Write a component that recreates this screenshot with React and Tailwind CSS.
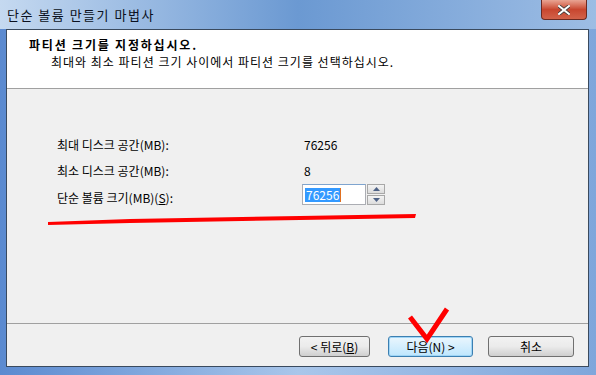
import React from 'react';

const ko = { fontFamily: '"Noto Sans CJK KR", "Noto Sans", "Liberation Sans", sans-serif' };

function WinButton({ children, focused, className = '' }) {
  return (
    <button
      className={`h-[21px] rounded-[3px] border text-[12px] leading-none text-black flex items-center justify-center ${
        focused
          ? 'border-[#3c7fb1] shadow-[0_0_0_1px_#9fd5f6_inset] bg-gradient-to-b from-[#eaf6fd] to-[#bee6fd]'
          : 'border-[#707070] bg-gradient-to-b from-[#f2f2f2] via-[#ebebeb] to-[#cfcfcf]'
      } ${className}`}
      style={ko}
    >
      {children}
    </button>
  );
}

export default function App() {
  return (
    <div
      className="relative w-[596px] h-[375px] overflow-hidden flex flex-col bg-gradient-to-r from-[#5b8ad0] via-[#a9c6ea] to-[#7fa6db]"
      style={ko}
    >
      {/* Title bar */}
      <div className="h-[29px] flex justify-between items-start bg-gradient-to-r from-[#c5d9f0] via-[#6b99d2] to-[#9dbde4]">
        <span className="pl-[7px] pt-[6px] text-[13px] leading-[17px] tracking-[1.5px] text-[#0a1020]">단순 볼륨 만들기 마법사</span>
        <div className="mr-[9px] w-[46px] h-[20px] rounded-b-[4px] border border-t-0 border-[#6b2a22] bg-gradient-to-b from-[#e8a493] via-[#c8462f] to-[#d2624a] flex items-center justify-center">
          <svg width="12" height="10" viewBox="0 0 12 10">
            <path d="M1 1 L11 9 M11 1 L1 9" stroke="#3a3a3a" strokeWidth="3.6" strokeLinecap="square" />
            <path d="M1 1 L11 9 M11 1 L1 9" stroke="#ffffff" strokeWidth="2" strokeLinecap="square" />
          </svg>
        </div>
      </div>

      {/* Client area */}
      <div className="flex-1 ml-[6px] mr-[7px] mb-[8px] border border-[#3a4a5e] bg-[#f0f0f0] flex flex-col">
        <div className="h-[59px] bg-white border-b border-[#a0a0a0] pl-[22px] pt-[7px]">
          <div className="text-[12px] leading-[16px] font-bold tracking-[1.8px] text-black">파티션 크기를 지정하십시오.</div>
          <div className="pl-[22px] pt-[1px] text-[12px] leading-[16px] tracking-[1px] text-black">
            최대와 최소 파티션 크기 사이에서 파티션 크기를 선택하십시오.
          </div>
        </div>

        <div className="flex-1 pl-[50px] pt-[48px] text-[12px] text-black">
          <div className="flex h-[26px] items-start">
            <span className="w-[247px] leading-[16px]">최대 디스크 공간(MB):</span>
            <span className="leading-[16px]">76256</span>
          </div>
          <div className="flex h-[26px] items-start">
            <span className="w-[247px] leading-[16px]">최소 디스크 공간(MB):</span>
            <span className="leading-[16px]">8</span>
          </div>
          <div className="flex items-start">
            <span className="w-[245px] leading-[16px] pt-[1px]">
              단순 볼륨 크기(MB)(<span className="underline">S</span>):
            </span>
            <div className="flex h-[21px] -mt-[5px]">
              <div className="w-[64px] h-[21px] bg-white border border-[#abadb3] border-t-[#7ea4cf] flex items-center pl-[2px]">
                <span className="bg-[#3399ff] text-white leading-[14px] px-[1px]">76256</span>
                <span className="w-[1px] h-[14px] bg-[#e07020]" />
              </div>
              <div className="ml-[1px] w-[18px] flex flex-col gap-[1px]">
                <div className="h-[10px] border border-[#a8a8a8] bg-gradient-to-b from-[#f4f4f4] to-[#dcdcdc] flex items-center justify-center">
                  <svg width="7" height="4" viewBox="0 0 7 4"><path d="M0 4 L3.5 0 L7 4 Z" fill="#4d6185" /></svg>
                </div>
                <div className="h-[10px] border border-[#a8a8a8] bg-gradient-to-b from-[#f4f4f4] to-[#dcdcdc] flex items-center justify-center">
                  <svg width="7" height="4" viewBox="0 0 7 4"><path d="M0 0 L3.5 4 L7 0 Z" fill="#4d6185" /></svg>
                </div>
              </div>
            </div>
          </div>
        </div>

        <div className="h-[43px] border-t border-[#a0a0a0] flex justify-end items-start pt-[12px] pr-[14px]">
          <WinButton className="w-[71px]">&lt; 뒤로(<span className="underline">B</span>)</WinButton>
          <WinButton focused className="w-[85px] ml-[18px]">다음(N) &gt;</WinButton>
          <WinButton className="w-[86px] ml-[15px]">취소</WinButton>
        </div>
      </div>

      {/* Red annotations */}
      <svg className="absolute left-0 top-0 pointer-events-none" width="596" height="375">
        <path d="M48 222 L130 219 L300 216 L416 214 L415 218 L300 220 L130 223 L48 225 Z" fill="#ff0000" />
        <polyline points="410,317 427,339 447,309" fill="none" stroke="#ff0000" strokeWidth="5" strokeLinejoin="miter" />
      </svg>
    </div>
  );
}
